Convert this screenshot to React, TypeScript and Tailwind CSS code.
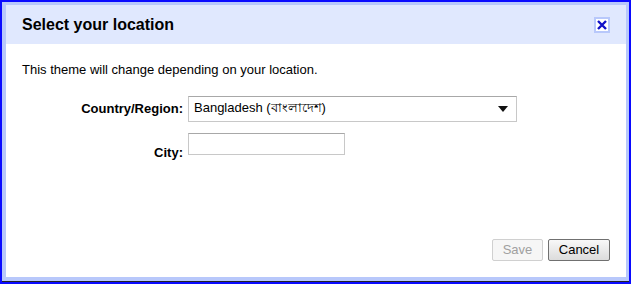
import React from 'react'

export default function App() {
  return (
    <div className="w-[631px] h-[284px] border-2 border-[#0a0aff] bg-white font-['Liberation_Sans',Arial,sans-serif]">
      <div className="h-full flex flex-col border-b border-[#222] bg-[#b8c8fb] pl-[4px] pr-[3px] pt-[3px] pb-[4px]">
        <div className="flex-1 flex flex-col bg-white">
          <div className="h-[39px] bg-[#e0e8fe] flex items-center justify-between pl-[16px] pr-[16px]">
            <h1 className="text-[16px] font-bold text-black leading-none">Select your location</h1>
            <button className="w-[16px] h-[16px] border-2 border-[#b8c8fb] bg-white flex items-center justify-center">
              <svg width="10" height="10" viewBox="0 0 10 10">
                <path d="M1 1 L9 9 M9 1 L1 9" stroke="#1010c8" strokeWidth="2.4" />
              </svg>
            </button>
          </div>
          <div className="flex-1 flex flex-col pl-[16px] pr-[16px] pt-[18px] pb-[16px] text-[13px] text-black">
            <p className="leading-[16px]">This theme will change depending on your location.</p>
            <div className="mt-[18px] flex items-center">
              <label className="w-[166px] pr-[5px] text-right font-bold">Country/Region:</label>
              <div className="w-[329px] h-[26px] border border-[#c8c8c8] border-t-[#a8a8a8] flex items-center justify-between pl-[5px] pr-[8px]">
                <span className="leading-none -mt-[4px]">Bangladesh (বাংলাদেশ)</span>
                <svg width="10" height="6" viewBox="0 0 10 6">
                  <path d="M0 0 H10 L5 6 Z" fill="#111" />
                </svg>
              </div>
            </div>
            <div className="mt-[11px] flex items-start">
              <label className="w-[166px] pr-[5px] text-right font-bold pt-[12px] leading-[16px]">City:</label>
              <input className="w-[157px] h-[22px] border border-[#c8c8c8] border-t-[#a8a8a8] outline-none" />
            </div>
            <div className="mt-auto flex justify-end gap-[5px]">
              <button disabled className="w-[51px] h-[22px] rounded-[2px] border border-[#d0d0d0] bg-[#f6f6f6] text-[#a0a0a0] text-[13px]">Save</button>
              <button className="w-[62px] h-[22px] rounded-[2px] border border-[#707070] bg-gradient-to-b from-[#f8f8f8] to-[#dcdcdc] text-black text-[13px]">Cancel</button>
            </div>
          </div>
        </div>
      </div>
    </div>
  )
}
